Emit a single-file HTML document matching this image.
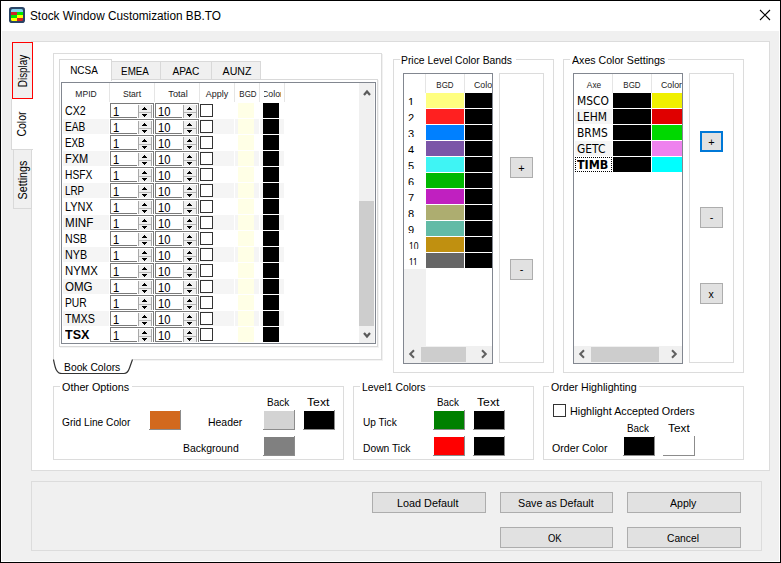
<!DOCTYPE html>
<html><head><meta charset="utf-8"><title>Stock Window Customization BB.TO</title>
<style>
html,body{margin:0;padding:0;}
body{width:781px;height:563px;position:relative;overflow:hidden;background:#000;font-family:"Liberation Sans",sans-serif;color:#000;}
div,span,svg{position:absolute;box-sizing:border-box;}
.t{white-space:nowrap;line-height:14px;height:14px;transform-origin:0 50%;}
.t.c{transform-origin:50% 50%;}
.t.v{transform-origin:50% 50%;}
.g{border:1px solid #dcdcdc;}
.lbl{background:#fff;padding:0 1px;}
.btn{background:#e1e1e1;border:1px solid #adadad;}
.sw{border-right:1px solid #8c8c8c;border-bottom:1px solid #8c8c8c;}
.lv{border:1px solid #828790;background:#fff;overflow:hidden;}
.sp{background:#fff;border:1px solid #7a7a7a;border-bottom:none;}
.sp i{position:absolute;left:0;bottom:0;width:26px;height:1px;background:#7a7a7a;}
.sp b{position:absolute;box-sizing:border-box;left:27px;top:1px;width:14px;height:13px;background:#f0f0f0;border-left:1px solid #a8a8a8;border-right:1px solid #a8a8a8;}
.sp b:before{content:"";position:absolute;left:0;right:0;top:7px;height:1px;background:#b8b8b8;}
.sp u{position:absolute;left:33px;top:3px;width:1px;height:1px;background:#000;box-shadow:-1px 1px 0 #000,0 1px 0 #000,1px 1px 0 #000,-2px 2px 0 #000,-1px 2px 0 #000,0 2px 0 #000,1px 2px 0 #000,2px 2px 0 #000;}
.sp s{position:absolute;left:33px;top:12px;width:1px;height:1px;background:#000;box-shadow:-1px -1px 0 #000,0 -1px 0 #000,1px -1px 0 #000,-2px -2px 0 #000,-1px -2px 0 #000,0 -2px 0 #000,1px -2px 0 #000,2px -2px 0 #000;}
.cb{background:#fff;border:1px solid #333;}
</style></head><body>

<div style="left:1px;top:1px;width:779px;height:561px;background:#fff;"></div>
<div style="left:2px;top:31px;width:777px;height:530px;background:#f0f0f0;"></div>
<svg style="left:9px;top:7px" width="16" height="16" viewBox="0 0 16 16"><defs><clipPath id="ic"><rect x="2" y="2" width="12" height="12" rx="1.6"/></clipPath></defs><rect x="0" y="0" width="16" height="16" rx="2.8" fill="#2a4466"/><g clip-path="url(#ic)"><rect x="2" y="2" width="12" height="3" fill="#86d2ee"/><rect x="2" y="5" width="6" height="3" fill="#d02424"/><rect x="8" y="5" width="6" height="3" fill="#00e800"/><rect x="2" y="8" width="6" height="3" fill="#00e800"/><rect x="8" y="8" width="6" height="3" fill="#ffff00"/><rect x="2" y="11" width="6" height="3" fill="#ffff00"/><rect x="8" y="11" width="6" height="3" fill="#d02424"/></g></svg>
<span class="t" style="left:30px;top:8.7px;font-size:12px;transform:scaleX(0.982);">Stock Window Customization BB.TO</span>
<svg style="left:759px;top:9px" width="12" height="12" viewBox="0 0 12 12"><path d="M1 1 L11 11 M11 1 L1 11" stroke="#000" stroke-width="1.1" fill="none"/></svg>
<div style="left:31px;top:41px;width:739px;height:430px;background:#fff;border:1px solid #dcdcdc;"></div>
<div style="left:31px;top:481px;width:731px;height:70px;border:1px solid #dcdcdc;"></div>
<div style="left:11px;top:99px;width:22px;height:51px;background:#fff;border-left:1px solid #d9d9d9;border-bottom:1px solid #d9d9d9;"></div>
<div style="left:13px;top:149px;width:19px;height:60px;background:#f0f0f0;border:1px solid #d9d9d9;"></div>
<div style="left:12px;top:42px;width:21px;height:57px;background:#f0f0f0;border:1px solid #ff0000;"></div>
<span class="t v" style="left:23.2px;top:71.1px;font-size:12px;transform:translate(-50%,-50%) rotate(-90deg) scaleX(0.823);">Display</span>
<span class="t v" style="left:22.1px;top:124.0px;font-size:12px;transform:translate(-50%,-50%) rotate(-90deg) scaleX(0.872);">Color</span>
<span class="t v" style="left:23.2px;top:179.9px;font-size:12px;transform:translate(-50%,-50%) rotate(-90deg) scaleX(0.894);">Settings</span>
<div style="left:53px;top:53px;width:329px;height:307px;border:1px solid #dcdcdc;border-bottom:none;"></div>
<div style="left:382px;top:54px;width:1px;height:306px;background:#f1f1f1;"></div>
<div style="left:59px;top:79px;width:319px;height:268px;border:1px solid #d9d9d9;background:#fff;"></div>
<div style="left:378px;top:80px;width:1px;height:268px;background:#f3f3f3;"></div>
<div style="left:60px;top:347px;width:319px;height:1px;background:#f3f3f3;"></div>
<div style="left:134px;top:360px;width:249px;height:1px;background:#f3f3f3;"></div>
<div style="left:111px;top:61px;width:50px;height:19px;background:#f0f0f0;border:1px solid #d9d9d9;"></div>
<span class="t c" style="left:134.8px;top:63.5px;font-size:10.9px;transform:translateX(-50%) scaleX(0.901);">EMEA</span>
<div style="left:160px;top:61px;width:52px;height:19px;background:#f0f0f0;border:1px solid #d9d9d9;"></div>
<span class="t c" style="left:186px;top:63.5px;font-size:10.9px;transform:translateX(-50%) scaleX(0.932);">APAC</span>
<div style="left:211px;top:61px;width:50px;height:19px;background:#f0f0f0;border:1px solid #d9d9d9;"></div>
<span class="t c" style="left:236.9px;top:63.5px;font-size:10.9px;transform:translateX(-50%) scaleX(0.973);">AUNZ</span>
<div style="left:59px;top:59px;width:53px;height:22px;background:#fff;border:1px solid #d9d9d9;border-bottom:none;"></div>
<span class="t c" style="left:83.6px;top:63px;font-size:10.9px;transform:translateX(-50%) scaleX(0.915);">NCSA</span>
<div class="lv" style="left:61px;top:82px;width:315px;height:262px;">
<div style="left:47px;top:0px;width:1px;height:19px;background:#e5e5e5;"></div>
<div style="left:92px;top:0px;width:1px;height:19px;background:#e5e5e5;"></div>
<div style="left:137px;top:0px;width:1px;height:19px;background:#e5e5e5;"></div>
<div style="left:172px;top:0px;width:1px;height:19px;background:#e5e5e5;"></div>
<div style="left:197px;top:0px;width:1px;height:19px;background:#e5e5e5;"></div>
<div style="left:222px;top:0px;width:1px;height:19px;background:#e5e5e5;"></div>
<span class="t c" style="left:23.5px;top:3.5px;font-size:9.3px;transform:translateX(-50%) scaleX(0.918);color:#222;">MPID</span>
<span class="t c" style="left:70.4px;top:3.5px;font-size:9.3px;transform:translateX(-50%) scaleX(0.925);color:#222;">Start</span>
<span class="t c" style="left:115.8px;top:3.5px;font-size:9.3px;transform:translateX(-50%) scaleX(0.985);color:#222;">Total</span>
<span class="t c" style="left:154.9px;top:3.5px;font-size:9.3px;transform:translateX(-50%) scaleX(0.963);color:#222;">Apply</span>
<span class="t c" style="left:185.6px;top:3.5px;font-size:9.3px;transform:translateX(-50%) scaleX(0.856);color:#222;">BGD</span>
<div style="left:201.5px;top:0px;width:17.6px;height:19px;overflow:hidden;"><span class="t" style="left:-1.8px;top:3.5px;font-size:9.3px;transform:scaleX(0.943);color:#222;">Color</span></div>
<span class="t" style="left:3px;top:20.9px;font-size:12.2px;transform:scaleX(0.869);">CX2</span>
<div class="sp" style="left:48px;top:20px;width:44px;height:15px;"><i></i><b></b><u></u><s></s><span class="t" style="left:2.2px;top:1.2px;font-size:12.6px;transform:scaleX(0.892);">1</span></div>
<div class="sp" style="left:93px;top:20px;width:44px;height:15px;"><i></i><b></b><u></u><s></s><span class="t" style="left:2.2px;top:1.2px;font-size:12.6px;transform:scaleX(0.892);">10</span></div>
<div class="cb" style="left:138px;top:21px;width:13px;height:13px;"></div>
<div style="left:176px;top:20px;width:16px;height:15px;background:#ffffe6;"></div>
<div style="left:201px;top:20px;width:16px;height:15px;background:#000;"></div>
<div style="left:1px;top:36px;width:221px;height:15px;background:#f5f5f5;"></div>
<span class="t" style="left:3px;top:36.9px;font-size:12.2px;transform:scaleX(0.833);">EAB</span>
<div class="sp" style="left:48px;top:36px;width:44px;height:15px;"><i></i><b></b><u></u><s></s><span class="t" style="left:2.2px;top:1.2px;font-size:12.6px;transform:scaleX(0.892);">1</span></div>
<div class="sp" style="left:93px;top:36px;width:44px;height:15px;"><i></i><b></b><u></u><s></s><span class="t" style="left:2.2px;top:1.2px;font-size:12.6px;transform:scaleX(0.892);">10</span></div>
<div class="cb" style="left:138px;top:37px;width:13px;height:13px;"></div>
<div style="left:176px;top:36px;width:16px;height:15px;background:#ffffe6;"></div>
<div style="left:201px;top:36px;width:16px;height:15px;background:#000;"></div>
<span class="t" style="left:3px;top:52.9px;font-size:12.2px;transform:scaleX(0.806);">EXB</span>
<div class="sp" style="left:48px;top:52px;width:44px;height:15px;"><i></i><b></b><u></u><s></s><span class="t" style="left:2.2px;top:1.2px;font-size:12.6px;transform:scaleX(0.892);">1</span></div>
<div class="sp" style="left:93px;top:52px;width:44px;height:15px;"><i></i><b></b><u></u><s></s><span class="t" style="left:2.2px;top:1.2px;font-size:12.6px;transform:scaleX(0.892);">10</span></div>
<div class="cb" style="left:138px;top:53px;width:13px;height:13px;"></div>
<div style="left:176px;top:52px;width:16px;height:15px;background:#ffffe6;"></div>
<div style="left:201px;top:52px;width:16px;height:15px;background:#000;"></div>
<div style="left:1px;top:68px;width:221px;height:15px;background:#f5f5f5;"></div>
<span class="t" style="left:3px;top:68.9px;font-size:12.2px;transform:scaleX(0.905);">FXM</span>
<div class="sp" style="left:48px;top:68px;width:44px;height:15px;"><i></i><b></b><u></u><s></s><span class="t" style="left:2.2px;top:1.2px;font-size:12.6px;transform:scaleX(0.892);">1</span></div>
<div class="sp" style="left:93px;top:68px;width:44px;height:15px;"><i></i><b></b><u></u><s></s><span class="t" style="left:2.2px;top:1.2px;font-size:12.6px;transform:scaleX(0.892);">10</span></div>
<div class="cb" style="left:138px;top:69px;width:13px;height:13px;"></div>
<div style="left:176px;top:68px;width:16px;height:15px;background:#ffffe6;"></div>
<div style="left:201px;top:68px;width:16px;height:15px;background:#000;"></div>
<span class="t" style="left:3px;top:84.9px;font-size:12.2px;transform:scaleX(0.841);">HSFX</span>
<div class="sp" style="left:48px;top:84px;width:44px;height:15px;"><i></i><b></b><u></u><s></s><span class="t" style="left:2.2px;top:1.2px;font-size:12.6px;transform:scaleX(0.892);">1</span></div>
<div class="sp" style="left:93px;top:84px;width:44px;height:15px;"><i></i><b></b><u></u><s></s><span class="t" style="left:2.2px;top:1.2px;font-size:12.6px;transform:scaleX(0.892);">10</span></div>
<div class="cb" style="left:138px;top:85px;width:13px;height:13px;"></div>
<div style="left:176px;top:84px;width:16px;height:15px;background:#ffffe6;"></div>
<div style="left:201px;top:84px;width:16px;height:15px;background:#000;"></div>
<div style="left:1px;top:100px;width:221px;height:15px;background:#f5f5f5;"></div>
<span class="t" style="left:3px;top:100.9px;font-size:12.2px;transform:scaleX(0.81);">LRP</span>
<div class="sp" style="left:48px;top:100px;width:44px;height:15px;"><i></i><b></b><u></u><s></s><span class="t" style="left:2.2px;top:1.2px;font-size:12.6px;transform:scaleX(0.892);">1</span></div>
<div class="sp" style="left:93px;top:100px;width:44px;height:15px;"><i></i><b></b><u></u><s></s><span class="t" style="left:2.2px;top:1.2px;font-size:12.6px;transform:scaleX(0.892);">10</span></div>
<div class="cb" style="left:138px;top:101px;width:13px;height:13px;"></div>
<div style="left:176px;top:100px;width:16px;height:15px;background:#ffffe6;"></div>
<div style="left:201px;top:100px;width:16px;height:15px;background:#000;"></div>
<span class="t" style="left:3px;top:116.9px;font-size:12.2px;transform:scaleX(0.9);">LYNX</span>
<div class="sp" style="left:48px;top:116px;width:44px;height:15px;"><i></i><b></b><u></u><s></s><span class="t" style="left:2.2px;top:1.2px;font-size:12.6px;transform:scaleX(0.892);">1</span></div>
<div class="sp" style="left:93px;top:116px;width:44px;height:15px;"><i></i><b></b><u></u><s></s><span class="t" style="left:2.2px;top:1.2px;font-size:12.6px;transform:scaleX(0.892);">10</span></div>
<div class="cb" style="left:138px;top:117px;width:13px;height:13px;"></div>
<div style="left:176px;top:116px;width:16px;height:15px;background:#ffffe6;"></div>
<div style="left:201px;top:116px;width:16px;height:15px;background:#000;"></div>
<div style="left:1px;top:132px;width:221px;height:15px;background:#f5f5f5;"></div>
<span class="t" style="left:3px;top:132.9px;font-size:12.2px;transform:scaleX(0.95);">MINF</span>
<div class="sp" style="left:48px;top:132px;width:44px;height:15px;"><i></i><b></b><u></u><s></s><span class="t" style="left:2.2px;top:1.2px;font-size:12.6px;transform:scaleX(0.892);">1</span></div>
<div class="sp" style="left:93px;top:132px;width:44px;height:15px;"><i></i><b></b><u></u><s></s><span class="t" style="left:2.2px;top:1.2px;font-size:12.6px;transform:scaleX(0.892);">10</span></div>
<div class="cb" style="left:138px;top:133px;width:13px;height:13px;"></div>
<div style="left:176px;top:132px;width:16px;height:15px;background:#ffffe6;"></div>
<div style="left:201px;top:132px;width:16px;height:15px;background:#000;"></div>
<span class="t" style="left:3px;top:148.9px;font-size:12.2px;transform:scaleX(0.871);">NSB</span>
<div class="sp" style="left:48px;top:148px;width:44px;height:15px;"><i></i><b></b><u></u><s></s><span class="t" style="left:2.2px;top:1.2px;font-size:12.6px;transform:scaleX(0.892);">1</span></div>
<div class="sp" style="left:93px;top:148px;width:44px;height:15px;"><i></i><b></b><u></u><s></s><span class="t" style="left:2.2px;top:1.2px;font-size:12.6px;transform:scaleX(0.892);">10</span></div>
<div class="cb" style="left:138px;top:149px;width:13px;height:13px;"></div>
<div style="left:176px;top:148px;width:16px;height:15px;background:#ffffe6;"></div>
<div style="left:201px;top:148px;width:16px;height:15px;background:#000;"></div>
<div style="left:1px;top:164px;width:221px;height:15px;background:#f5f5f5;"></div>
<span class="t" style="left:3px;top:164.9px;font-size:12.2px;transform:scaleX(0.881);">NYB</span>
<div class="sp" style="left:48px;top:164px;width:44px;height:15px;"><i></i><b></b><u></u><s></s><span class="t" style="left:2.2px;top:1.2px;font-size:12.6px;transform:scaleX(0.892);">1</span></div>
<div class="sp" style="left:93px;top:164px;width:44px;height:15px;"><i></i><b></b><u></u><s></s><span class="t" style="left:2.2px;top:1.2px;font-size:12.6px;transform:scaleX(0.892);">10</span></div>
<div class="cb" style="left:138px;top:165px;width:13px;height:13px;"></div>
<div style="left:176px;top:164px;width:16px;height:15px;background:#ffffe6;"></div>
<div style="left:201px;top:164px;width:16px;height:15px;background:#000;"></div>
<span class="t" style="left:3px;top:180.9px;font-size:12.2px;transform:scaleX(0.933);">NYMX</span>
<div class="sp" style="left:48px;top:180px;width:44px;height:15px;"><i></i><b></b><u></u><s></s><span class="t" style="left:2.2px;top:1.2px;font-size:12.6px;transform:scaleX(0.892);">1</span></div>
<div class="sp" style="left:93px;top:180px;width:44px;height:15px;"><i></i><b></b><u></u><s></s><span class="t" style="left:2.2px;top:1.2px;font-size:12.6px;transform:scaleX(0.892);">10</span></div>
<div class="cb" style="left:138px;top:181px;width:13px;height:13px;"></div>
<div style="left:176px;top:180px;width:16px;height:15px;background:#ffffe6;"></div>
<div style="left:201px;top:180px;width:16px;height:15px;background:#000;"></div>
<div style="left:1px;top:196px;width:221px;height:15px;background:#f5f5f5;"></div>
<span class="t" style="left:3px;top:196.9px;font-size:12.2px;transform:scaleX(0.947);">OMG</span>
<div class="sp" style="left:48px;top:196px;width:44px;height:15px;"><i></i><b></b><u></u><s></s><span class="t" style="left:2.2px;top:1.2px;font-size:12.6px;transform:scaleX(0.892);">1</span></div>
<div class="sp" style="left:93px;top:196px;width:44px;height:15px;"><i></i><b></b><u></u><s></s><span class="t" style="left:2.2px;top:1.2px;font-size:12.6px;transform:scaleX(0.892);">10</span></div>
<div class="cb" style="left:138px;top:197px;width:13px;height:13px;"></div>
<div style="left:176px;top:196px;width:16px;height:15px;background:#ffffe6;"></div>
<div style="left:201px;top:196px;width:16px;height:15px;background:#000;"></div>
<span class="t" style="left:3px;top:212.9px;font-size:12.2px;transform:scaleX(0.845);">PUR</span>
<div class="sp" style="left:48px;top:212px;width:44px;height:15px;"><i></i><b></b><u></u><s></s><span class="t" style="left:2.2px;top:1.2px;font-size:12.6px;transform:scaleX(0.892);">1</span></div>
<div class="sp" style="left:93px;top:212px;width:44px;height:15px;"><i></i><b></b><u></u><s></s><span class="t" style="left:2.2px;top:1.2px;font-size:12.6px;transform:scaleX(0.892);">10</span></div>
<div class="cb" style="left:138px;top:213px;width:13px;height:13px;"></div>
<div style="left:176px;top:212px;width:16px;height:15px;background:#ffffe6;"></div>
<div style="left:201px;top:212px;width:16px;height:15px;background:#000;"></div>
<div style="left:1px;top:228px;width:221px;height:15px;background:#f5f5f5;"></div>
<span class="t" style="left:3px;top:228.9px;font-size:12.2px;transform:scaleX(0.885);">TMXS</span>
<div class="sp" style="left:48px;top:228px;width:44px;height:15px;"><i></i><b></b><u></u><s></s><span class="t" style="left:2.2px;top:1.2px;font-size:12.6px;transform:scaleX(0.892);">1</span></div>
<div class="sp" style="left:93px;top:228px;width:44px;height:15px;"><i></i><b></b><u></u><s></s><span class="t" style="left:2.2px;top:1.2px;font-size:12.6px;transform:scaleX(0.892);">10</span></div>
<div class="cb" style="left:138px;top:229px;width:13px;height:13px;"></div>
<div style="left:176px;top:228px;width:16px;height:15px;background:#ffffe6;"></div>
<div style="left:201px;top:228px;width:16px;height:15px;background:#000;"></div>
<span class="t" style="left:3px;top:244.9px;font-size:12.2px;transform:scaleX(1.03);font-weight:bold;">TSX</span>
<div class="sp" style="left:48px;top:244px;width:44px;height:15px;"><i></i><b></b><u></u><s></s><span class="t" style="left:2.2px;top:1.2px;font-size:12.6px;transform:scaleX(0.892);">1</span></div>
<div class="sp" style="left:93px;top:244px;width:44px;height:15px;"><i></i><b></b><u></u><s></s><span class="t" style="left:2.2px;top:1.2px;font-size:12.6px;transform:scaleX(0.892);">10</span></div>
<div class="cb" style="left:138px;top:245px;width:13px;height:13px;"></div>
<div style="left:176px;top:244px;width:16px;height:15px;background:#ffffe6;"></div>
<div style="left:201px;top:244px;width:16px;height:15px;background:#000;"></div>
<div style="left:47px;top:19px;width:1px;height:241px;background:#fff;"></div>
<div style="left:92px;top:19px;width:1px;height:241px;background:#fff;"></div>
<div style="left:137px;top:19px;width:1px;height:241px;background:#fff;"></div>
<div style="left:172px;top:19px;width:1px;height:241px;background:#fff;"></div>
<div style="left:197px;top:19px;width:1px;height:241px;background:#fff;"></div>
<div style="left:297px;top:0px;width:15px;height:260px;background:#f0f0f0;"></div>
<div style="left:312px;top:0px;width:1px;height:260px;background:#f9f9f9;"></div>
<div style="left:297px;top:118px;width:15px;height:125px;background:#cdcdcd;"></div>
<svg style="left:299.5px;top:5.900000000000006px" width="10" height="8" viewBox="0 0 10 8"><path d="M2 6 L5 2.5 L8 6" stroke="#5a5a5a" stroke-width="2.2" fill="none"/></svg>
<svg style="left:299.5px;top:247.89999999999998px" width="10" height="8" viewBox="0 0 10 8"><path d="M2 2 L5 5.5 L8 2" stroke="#5a5a5a" stroke-width="2.2" fill="none"/></svg>
</div>
<svg style="left:50px;top:357px" width="335" height="20" viewBox="0 0 335 20"><path d="M82.5 2.5 L332 2.5" stroke="#dcdcdc" stroke-width="1" fill="none"/><path d="M3.5 2.5 C5 10 6 16.5 12 16.5 L74 16.5 C77.5 16.5 78.5 14 79.5 11 L82.5 2.5" stroke="#333" stroke-width="1.2" fill="none"/></svg>
<span class="t" style="left:63.8px;top:360.3px;font-size:10.9px;transform:scaleX(0.948);">Book Colors</span>
<div class="g" style="left:393px;top:59px;width:161px;height:314px;"></div>
<div style="left:400px;top:59px;width:116px;height:1px;background:#fff;"></div>
<span class="t" style="left:401.2px;top:53.2px;font-size:10.9px;transform:scaleX(0.95);">Price Level Color Bands</span>
<div class="g" style="left:499px;top:73px;width:45px;height:290px;"></div>
<div class="btn" style="left:510px;top:157px;width:23px;height:21px;"></div>
<span class="t c" style="left:521.5px;top:160.5px;font-size:11px;transform:translateX(-50%) scaleX(1);">+</span>
<div class="btn" style="left:510px;top:259px;width:23px;height:21px;"></div>
<span class="t c" style="left:521.5px;top:261.7px;font-size:11px;transform:translateX(-50%) scaleX(1);">-</span>
<div class="lv" style="left:403px;top:73px;width:90px;height:291px;">
<div style="left:21px;top:0px;width:1px;height:19px;background:#e5e5e5;"></div>
<div style="left:60px;top:0px;width:1px;height:19px;background:#e5e5e5;"></div>
<span class="t c" style="left:41.3px;top:3.5px;font-size:9.3px;transform:translateX(-50%) scaleX(0.856);color:#222;">BGD</span>
<span class="t" style="left:70px;top:3.5px;font-size:9.3px;transform:scaleX(0.943);color:#222;">Color</span>
<span class="t" style="left:4.3px;top:21px;font-size:11.399999999999999px;transform:scaleX(0.969);">1</span>
<div style="left:0px;top:31px;width:21px;height:4px;background:#fff;"></div>
<div style="left:22px;top:19px;width:38px;height:15px;background:#ffff80;"></div>
<div style="left:61px;top:19px;width:27px;height:15px;background:#000;"></div>
<span class="t" style="left:4.3px;top:37px;font-size:11.399999999999999px;transform:scaleX(0.969);">2</span>
<div style="left:0px;top:47px;width:21px;height:4px;background:#fff;"></div>
<div style="left:22px;top:35px;width:38px;height:15px;background:#ff2020;"></div>
<div style="left:61px;top:35px;width:27px;height:15px;background:#000;"></div>
<span class="t" style="left:4.3px;top:53px;font-size:11.399999999999999px;transform:scaleX(0.969);">3</span>
<div style="left:0px;top:63px;width:21px;height:4px;background:#fff;"></div>
<div style="left:22px;top:51px;width:38px;height:15px;background:#0080ff;"></div>
<div style="left:61px;top:51px;width:27px;height:15px;background:#000;"></div>
<span class="t" style="left:4.3px;top:69px;font-size:11.399999999999999px;transform:scaleX(0.969);">4</span>
<div style="left:0px;top:79px;width:21px;height:4px;background:#fff;"></div>
<div style="left:22px;top:67px;width:38px;height:15px;background:#7b55a8;"></div>
<div style="left:61px;top:67px;width:27px;height:15px;background:#000;"></div>
<span class="t" style="left:4.3px;top:85px;font-size:11.399999999999999px;transform:scaleX(0.969);">5</span>
<div style="left:0px;top:95px;width:21px;height:4px;background:#fff;"></div>
<div style="left:22px;top:83px;width:38px;height:15px;background:#3ff4f4;"></div>
<div style="left:61px;top:83px;width:27px;height:15px;background:#000;"></div>
<span class="t" style="left:4.3px;top:101px;font-size:11.399999999999999px;transform:scaleX(0.969);">6</span>
<div style="left:0px;top:111px;width:21px;height:4px;background:#fff;"></div>
<div style="left:22px;top:99px;width:38px;height:15px;background:#00b800;"></div>
<div style="left:61px;top:99px;width:27px;height:15px;background:#000;"></div>
<span class="t" style="left:4.3px;top:117px;font-size:11.399999999999999px;transform:scaleX(0.969);">7</span>
<div style="left:0px;top:127px;width:21px;height:4px;background:#fff;"></div>
<div style="left:22px;top:115px;width:38px;height:15px;background:#c020c0;"></div>
<div style="left:61px;top:115px;width:27px;height:15px;background:#000;"></div>
<span class="t" style="left:4.3px;top:133px;font-size:11.399999999999999px;transform:scaleX(0.969);">8</span>
<div style="left:0px;top:143px;width:21px;height:4px;background:#fff;"></div>
<div style="left:22px;top:131px;width:38px;height:15px;background:#adad70;"></div>
<div style="left:61px;top:131px;width:27px;height:15px;background:#000;"></div>
<span class="t" style="left:4.3px;top:149px;font-size:11.399999999999999px;transform:scaleX(0.969);">9</span>
<div style="left:0px;top:159px;width:21px;height:4px;background:#fff;"></div>
<div style="left:22px;top:147px;width:38px;height:15px;background:#62bba6;"></div>
<div style="left:61px;top:147px;width:27px;height:15px;background:#000;"></div>
<span class="t" style="left:4.9px;top:165px;font-size:11.399999999999999px;transform:scaleX(0.751);">10</span>
<div style="left:0px;top:175px;width:21px;height:4px;background:#fff;"></div>
<div style="left:22px;top:163px;width:38px;height:15px;background:#c09010;"></div>
<div style="left:61px;top:163px;width:27px;height:15px;background:#000;"></div>
<span class="t" style="left:4.9px;top:181px;font-size:11.399999999999999px;transform:scaleX(0.717);">11</span>
<div style="left:0px;top:191px;width:21px;height:4px;background:#fff;"></div>
<div style="left:22px;top:179px;width:38px;height:15px;background:#666666;"></div>
<div style="left:61px;top:179px;width:27px;height:15px;background:#000;"></div>
<div style="left:0px;top:195px;width:22px;height:77px;background:#f0f0f0;"></div>
<div style="left:0px;top:272px;width:88px;height:17px;background:#f0f0f0;"></div>
<div style="left:17px;top:273px;width:45px;height:15px;background:#cdcdcd;"></div>
<svg style="left:4px;top:275px" width="8" height="10" viewBox="0 0 8 10"><path d="M6 1.2 L2.2 5 L6 8.8" stroke="#606060" stroke-width="2" fill="none"/></svg>
<svg style="left:76px;top:275px" width="8" height="10" viewBox="0 0 8 10"><path d="M2 1.2 L5.8 5 L2 8.8" stroke="#606060" stroke-width="2" fill="none"/></svg>
</div>
<div class="g" style="left:563px;top:59px;width:181px;height:314px;"></div>
<div style="left:570px;top:59px;width:98px;height:1px;background:#fff;"></div>
<span class="t" style="left:571.5px;top:53.2px;font-size:10.9px;transform:scaleX(0.974);">Axes Color Settings</span>
<div class="g" style="left:689px;top:73px;width:45px;height:290px;"></div>
<div style="left:700px;top:131px;width:23px;height:21px;background:#e1e1e1;border:2px solid #0078d7;"></div>
<span class="t c" style="left:711.5px;top:134.5px;font-size:11px;transform:translateX(-50%) scaleX(1);">+</span>
<div class="btn" style="left:700px;top:207px;width:23px;height:21px;"></div>
<span class="t c" style="left:711.5px;top:209.6px;font-size:11px;transform:translateX(-50%) scaleX(1);">-</span>
<div class="btn" style="left:700px;top:283px;width:23px;height:21px;"></div>
<span class="t c" style="left:711.3px;top:287.2px;font-size:11px;transform:translateX(-50%) scaleX(0.95);">x</span>
<div class="lv" style="left:573px;top:73px;width:110px;height:291px;">
<div style="left:38px;top:0px;width:1px;height:19px;background:#e5e5e5;"></div>
<div style="left:77px;top:0px;width:1px;height:19px;background:#e5e5e5;"></div>
<span class="t c" style="left:19.6px;top:3.5px;font-size:9.3px;transform:translateX(-50%) scaleX(0.893);color:#222;">Axe</span>
<span class="t c" style="left:58.3px;top:3.5px;font-size:9.3px;transform:translateX(-50%) scaleX(0.856);color:#222;">BGD</span>
<span class="t" style="left:87.3px;top:3.5px;font-size:9.3px;transform:scaleX(0.943);color:#222;">Color</span>
<span class="t" style="left:3px;top:20.1px;font-size:11.5px;transform:scaleX(0.93);font-family:'DejaVu Sans','Liberation Sans',sans-serif;">MSCO</span>
<div style="left:39px;top:19px;width:38px;height:15px;background:#000;"></div>
<div style="left:78px;top:19px;width:30px;height:15px;background:#f0f000;"></div>
<div style="left:1px;top:35px;width:37px;height:15px;background:#f5f5f5;"></div>
<span class="t" style="left:3px;top:36.1px;font-size:11.5px;transform:scaleX(0.93);font-family:'DejaVu Sans','Liberation Sans',sans-serif;">LEHM</span>
<div style="left:39px;top:35px;width:38px;height:15px;background:#000;"></div>
<div style="left:78px;top:35px;width:30px;height:15px;background:#e00000;"></div>
<span class="t" style="left:3px;top:52.1px;font-size:11.5px;transform:scaleX(0.93);font-family:'DejaVu Sans','Liberation Sans',sans-serif;">BRMS</span>
<div style="left:39px;top:51px;width:38px;height:15px;background:#000;"></div>
<div style="left:78px;top:51px;width:30px;height:15px;background:#00d800;"></div>
<div style="left:1px;top:67px;width:37px;height:15px;background:#f5f5f5;"></div>
<span class="t" style="left:3px;top:68.1px;font-size:11.5px;transform:scaleX(0.93);font-family:'DejaVu Sans','Liberation Sans',sans-serif;">GETC</span>
<div style="left:39px;top:67px;width:38px;height:15px;background:#000;"></div>
<div style="left:78px;top:67px;width:30px;height:15px;background:#ee82ee;"></div>
<div style="left:1px;top:83px;width:37px;height:15px;border:1px dotted #000;"></div>
<span class="t" style="left:3px;top:84.1px;font-size:11.5px;transform:scaleX(0.97);font-weight:bold;font-family:'DejaVu Sans','Liberation Sans',sans-serif;">TIMB</span>
<div style="left:39px;top:83px;width:38px;height:15px;background:#000;"></div>
<div style="left:78px;top:83px;width:30px;height:15px;background:#00ffff;"></div>
<div style="left:0px;top:272px;width:108px;height:17px;background:#f0f0f0;"></div>
<div style="left:17px;top:273px;width:68px;height:15px;background:#cdcdcd;"></div>
<svg style="left:4px;top:275px" width="8" height="10" viewBox="0 0 8 10"><path d="M6 1.2 L2.2 5 L6 8.8" stroke="#606060" stroke-width="2" fill="none"/></svg>
<svg style="left:96px;top:275px" width="8" height="10" viewBox="0 0 8 10"><path d="M2 1.2 L5.8 5 L2 8.8" stroke="#606060" stroke-width="2" fill="none"/></svg>
</div>
<div class="g" style="left:53px;top:386px;width:291px;height:74px;"></div>
<div style="left:60px;top:386px;width:72px;height:1px;background:#fff;"></div>
<span class="t" style="left:61.5px;top:379.9px;font-size:10.9px;transform:scaleX(0.99);">Other Options</span>
<span class="t" style="left:62.2px;top:415.2px;font-size:10.9px;transform:scaleX(0.934);">Grid Line Color</span>
<div class="sw" style="left:149px;top:410px;width:32px;height:20px;"><div style="left:1px;top:1px;width:30px;height:18px;background:#d2691e;"></div></div>
<span class="t" style="left:208.2px;top:415.2px;font-size:10.9px;transform:scaleX(0.959);">Header</span>
<span class="t" style="left:183.2px;top:440.9px;font-size:10.9px;transform:scaleX(0.958);">Background</span>
<span class="t" style="left:267.1px;top:395.2px;font-size:10.9px;transform:scaleX(0.917);">Back</span>
<span class="t" style="left:307.4px;top:395.2px;font-size:10.9px;transform:scaleX(1.125);">Text</span>
<div class="sw" style="left:263px;top:410px;width:32px;height:20px;"><div style="left:1px;top:1px;width:30px;height:18px;background:#d3d3d3;"></div></div>
<div class="sw" style="left:303px;top:410px;width:32px;height:20px;"><div style="left:1px;top:1px;width:30px;height:18px;background:#000;"></div></div>
<div class="sw" style="left:263px;top:436px;width:32px;height:20px;"><div style="left:1px;top:1px;width:30px;height:18px;background:#808080;"></div></div>
<div class="g" style="left:353px;top:386px;width:181px;height:74px;"></div>
<div style="left:360px;top:386px;width:68px;height:1px;background:#fff;"></div>
<span class="t" style="left:361.5px;top:379.9px;font-size:10.9px;transform:scaleX(0.953);">Level1 Colors</span>
<span class="t" style="left:437.3px;top:395.2px;font-size:10.9px;transform:scaleX(0.901);">Back</span>
<span class="t" style="left:477.2px;top:395.2px;font-size:10.9px;transform:scaleX(1.12);">Text</span>
<span class="t" style="left:362.5px;top:415.2px;font-size:10.9px;transform:scaleX(0.928);">Up Tick</span>
<span class="t" style="left:362.5px;top:440.9px;font-size:10.9px;transform:scaleX(0.944);">Down Tick</span>
<div class="sw" style="left:433px;top:410px;width:32px;height:20px;"><div style="left:1px;top:1px;width:30px;height:18px;background:#008000;"></div></div>
<div class="sw" style="left:473px;top:410px;width:32px;height:20px;"><div style="left:1px;top:1px;width:30px;height:18px;background:#000;"></div></div>
<div class="sw" style="left:433px;top:436px;width:32px;height:20px;"><div style="left:1px;top:1px;width:30px;height:18px;background:#ff0000;"></div></div>
<div class="sw" style="left:473px;top:436px;width:32px;height:20px;"><div style="left:1px;top:1px;width:30px;height:18px;background:#000;"></div></div>
<div class="g" style="left:543px;top:386px;width:201px;height:74px;"></div>
<div style="left:549px;top:386px;width:90px;height:1px;background:#fff;"></div>
<span class="t" style="left:551.0px;top:379.9px;font-size:10.9px;transform:scaleX(0.975);">Order Highlighting</span>
<div class="cb" style="left:553px;top:404px;width:13px;height:13px;"></div>
<span class="t" style="left:570.2px;top:403.8px;font-size:10.9px;transform:scaleX(0.985);">Highlight Accepted Orders</span>
<span class="t" style="left:627.0px;top:421.2px;font-size:10.9px;transform:scaleX(0.909);">Back</span>
<span class="t" style="left:667.6px;top:421.2px;font-size:10.9px;transform:scaleX(1.085);">Text</span>
<span class="t" style="left:552.3px;top:440.9px;font-size:10.9px;transform:scaleX(0.976);">Order Color</span>
<div class="sw" style="left:623px;top:436px;width:32px;height:20px;"><div style="left:1px;top:1px;width:30px;height:18px;background:#000;"></div></div>
<div class="sw" style="left:663px;top:436px;width:32px;height:20px;"><div style="left:1px;top:1px;width:30px;height:18px;background:#fff;"></div></div>
<div class="btn" style="left:372px;top:492px;width:114px;height:21px;"></div>
<span class="t" style="left:396.7px;top:495.8px;font-size:10.9px;transform:scaleX(0.995);">Load Default</span>
<div class="btn" style="left:500px;top:492px;width:113px;height:21px;"></div>
<span class="t" style="left:517.6px;top:495.8px;font-size:10.9px;transform:scaleX(0.985);">Save as Default</span>
<div class="btn" style="left:627px;top:492px;width:114px;height:21px;"></div>
<span class="t" style="left:669.7px;top:495.8px;font-size:10.9px;transform:scaleX(0.969);">Apply</span>
<div class="btn" style="left:500px;top:527px;width:113px;height:21px;"></div>
<span class="t" style="left:548.2px;top:530.8px;font-size:10.9px;transform:scaleX(0.87);">OK</span>
<div class="btn" style="left:627px;top:527px;width:114px;height:21px;"></div>
<span class="t" style="left:667.1px;top:530.8px;font-size:10.9px;transform:scaleX(0.942);">Cancel</span>
</body></html>
